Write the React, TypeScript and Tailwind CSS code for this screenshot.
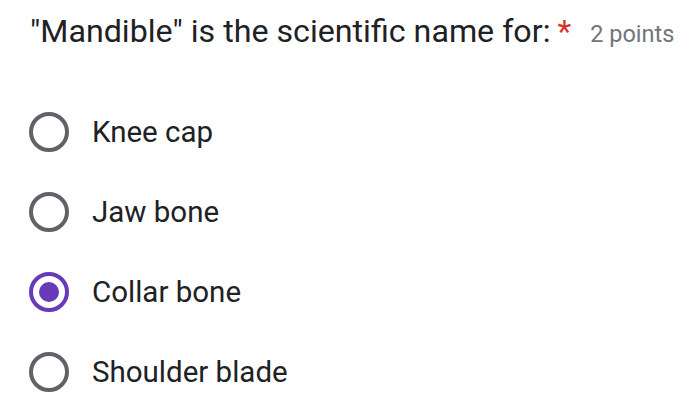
import React from "react";

const options = [
  { label: "Knee cap", selected: false },
  { label: "Jaw bone", selected: false },
  { label: "Collar bone", selected: true },
  { label: "Shoulder blade", selected: false },
];

function Radio({ selected }: { selected: boolean }) {
  if (selected) {
    return (
      <div className="flex h-[40px] w-[40px] shrink-0 items-center justify-center rounded-full border-[4px] border-[#673ab7]">
        <div className="h-[20px] w-[20px] rounded-full bg-[#673ab7]" />
      </div>
    );
  }
  return <div className="h-[40px] w-[40px] shrink-0 rounded-full border-[4px] border-[#5f6368]" />;
}

export default function App() {
  return (
    <div
      className="h-[416px] w-[694px] bg-white"
      style={{ fontFamily: "Roboto, 'Liberation Sans', sans-serif" }}
    >
      <div className="flex items-baseline pl-[30px] pt-[13px]">
        <span className="text-[32.2px] leading-[36px] text-[#202124]">
          "Mandible" is the scientific name for:
        </span>
        <span className="ml-[7px] text-[32px] leading-[36px] text-[#d93025]">*</span>
        <span className="ml-[19px] text-[23.5px] leading-[36px] text-[#70757a]">2 points</span>
      </div>
      <div className="mt-[40px] flex flex-col">
        {options.map((o) => (
          <div key={o.label} className="flex h-[80px] items-center pl-[29px]">
            <Radio selected={o.selected} />
            <span className="ml-[23px] text-[29.5px] leading-[36px] text-[#202124]">{o.label}</span>
          </div>
        ))}
      </div>
    </div>
  );
}
